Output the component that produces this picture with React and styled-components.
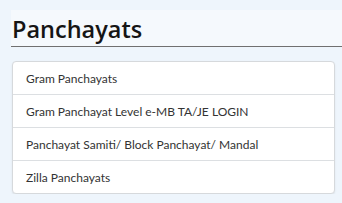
import React from "react";
import styled, { createGlobalStyle } from "styled-components";

const links = [
  "Gram Panchayats",
  "Gram Panchayat Level e-MB TA/JE LOGIN",
  "Panchayat Samiti/ Block Panchayat/ Mandal",
  "Zilla Panchayats",
];

const Global = createGlobalStyle`
  body {
    margin: 0;
    background: #eef5fc;
    font-family: "Open Sans", "Noto Sans", sans-serif;
  }
`;

export default function App() {
  return (
    <>
      <Global />
      <Page>
        <Heading>Panchayats</Heading>
        <List>
          {links.map(label => (
            <Item key={label}>{label}</Item>
          ))}
        </List>
      </Page>
    </>
  );
}

const Page = styled.div`
  padding: 10px 0 0 11px;
`;

const Heading = styled.h2`
  margin: 0;
  height: 37px;
  box-sizing: border-box;
  padding: 4px 0 0 1px;
  background: #f5f9fd;
  border-bottom: 1px solid #707070;
  font-size: 23.5px;
  font-weight: 600;
  color: #151515;
  line-height: 30px;
`;

const List = styled.div`
  margin: 14px 7px 0 1px;
  background: #fff;
  border: 1px solid #d6d9dc;
  border-radius: 4px;
  box-shadow: 0 1px 2px rgba(0, 0, 0, 0.08);
`;

const Item = styled.div`
  height: 32px;
  display: flex;
  align-items: center;
  padding: 0 13px;
  font-family: Lato, "Open Sans", sans-serif;
  font-size: 12px;
  color: #333;
  & + & {
    border-top: 1px solid #dcdfe2;
  }
`;
